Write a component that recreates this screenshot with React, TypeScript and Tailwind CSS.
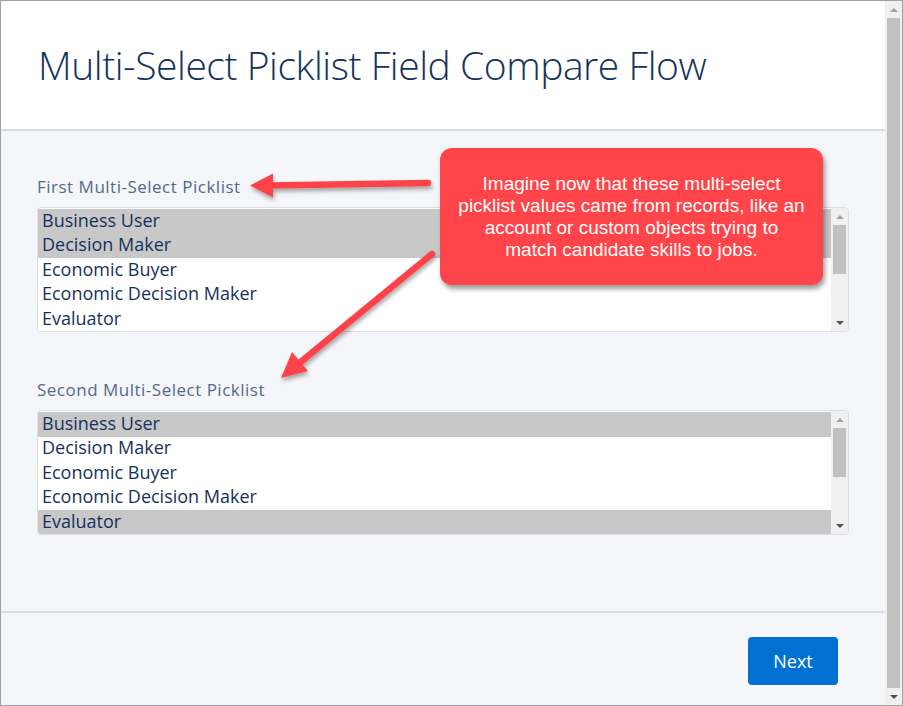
const firstOptions = [
  { label: "Business User", selected: true },
  { label: "Decision Maker", selected: true },
  { label: "Economic Buyer", selected: false },
  { label: "Economic Decision Maker", selected: false },
  { label: "Evaluator", selected: false },
];

const secondOptions = [
  { label: "Business User", selected: true },
  { label: "Decision Maker", selected: false },
  { label: "Economic Buyer", selected: false },
  { label: "Economic Decision Maker", selected: false },
  { label: "Evaluator", selected: true },
];

function ScrollBar({ thumbHeight }: { thumbHeight: string }) {
  return (
    <div className="w-[17px] bg-[#f0f0f0] flex flex-col items-center shrink-0">
      <div className="h-[17px] w-full flex items-center justify-center">
        <div className="w-0 h-0 border-l-[4px] border-r-[4px] border-b-[4px] border-l-transparent border-r-transparent border-b-[#a3a3a3]" />
      </div>
      <div className={`w-[13px] bg-[#c1c1c1] ${thumbHeight}`} />
      <div className="flex-1" />
      <div className="h-[17px] w-full flex items-center justify-center">
        <div className="w-0 h-0 border-l-[4px] border-r-[4px] border-t-[4px] border-l-transparent border-r-transparent border-t-[#505050]" />
      </div>
    </div>
  );
}

function Picklist({ label, options }: { label: string; options: { label: string; selected: boolean }[] }) {
  return (
    <div className="flex flex-col">
      <p className="text-[17px] leading-[24px] tracking-[0.5px] text-[#54698d] mb-[8px]">{label}</p>
      <div className="flex h-[125px] border border-[#d8dde6] rounded-[4px] bg-white overflow-hidden">
        <div className="flex-1 flex flex-col pt-[1px]">
          {options.map((o) => (
            <div
              key={o.label}
              className={`h-[24.5px] pl-[4px] pb-[2px] flex items-center text-[18px] text-[#16325c] ${o.selected ? "bg-[#c8c8c8]" : "bg-white"}`}
            >
              {o.label}
            </div>
          ))}
        </div>
        <ScrollBar thumbHeight="h-[49px]" />
      </div>
    </div>
  );
}

export default function App() {
  return (
    <div className="relative w-[903px] h-[706px] border border-[#a0a0a0] bg-white flex overflow-hidden font-['Open_Sans',sans-serif]">
      <div className="flex-1 flex flex-col">
        <div className="h-[130px] bg-white border-b-2 border-[#d8dde6] flex items-center pl-[37px]">
          <h1 className="text-[39px] font-light text-[#16325c] tracking-[-0.45px]">
            Multi-Select Picklist Field Compare Flow
          </h1>
        </div>
        <div className="flex-1 bg-[#f4f6f9] border-b-2 border-[#d8dde6] pt-[44px] pl-[36px] pr-[36px] flex flex-col gap-[46px]">
          <Picklist label="First Multi-Select Picklist" options={firstOptions} />
          <Picklist label="Second Multi-Select Picklist" options={secondOptions} />
        </div>
        <div className="h-[92px] bg-[#f4f6f9] flex items-center justify-end pr-[47px] pt-[4px]">
          <button className="w-[90px] h-[48px] rounded-[4px] bg-[#0070d2] text-white text-[18px]">
            Next
          </button>
        </div>
      </div>
      <div className="w-[17px] bg-[#f0f0f0] flex flex-col items-center">
        <div className="h-[17px] w-full flex items-center justify-center">
          <div className="w-0 h-0 border-l-[4px] border-r-[4px] border-b-[4px] border-l-transparent border-r-transparent border-b-[#a3a3a3]" />
        </div>
        <div className="w-[13px] flex-1 bg-[#c1c1c1]" />
        <div className="h-[17px] w-full flex items-center justify-center">
          <div className="w-0 h-0 border-l-[4px] border-r-[4px] border-t-[4px] border-l-transparent border-r-transparent border-t-[#505050]" />
        </div>
      </div>

      {/* annotation overlay */}
      <svg className="absolute left-0 top-0 pointer-events-none" width="903" height="706">
        <defs>
          <filter id="sh" x="-20%" y="-20%" width="140%" height="160%">
            <feDropShadow dx="1" dy="3" stdDeviation="2" floodColor="#000" floodOpacity="0.35" />
          </filter>
        </defs>
        <g filter="url(#sh)" fill="#fd4349" stroke="#fd4349">
          <line x1="427" y1="182" x2="268" y2="184.5" strokeWidth="6.5" strokeLinecap="round" />
          <polygon points="249,184.5 272,172.5 272,196.5" stroke="none" />
          <line x1="431" y1="253" x2="296" y2="364" strokeWidth="6.5" strokeLinecap="round" />
          <polygon points="280,377 291,351 307,370" stroke="none" />
        </g>
      </svg>
      <div className="absolute left-[439px] top-[147px] w-[383px] h-[137px] rounded-[12px] bg-[#ff444a] shadow-[2px_4px_5px_rgba(0,0,0,0.4)] flex items-center justify-center">
        <p className="font-['Liberation_Sans',Arial,sans-serif] text-white text-[19px] leading-[22px] text-center">
          Imagine now that these multi-select
          <br />
          picklist values came from records, like an
          <br />
          account or custom objects trying to
          <br />
          match candidate skills to jobs.
        </p>
      </div>
    </div>
  );
}
